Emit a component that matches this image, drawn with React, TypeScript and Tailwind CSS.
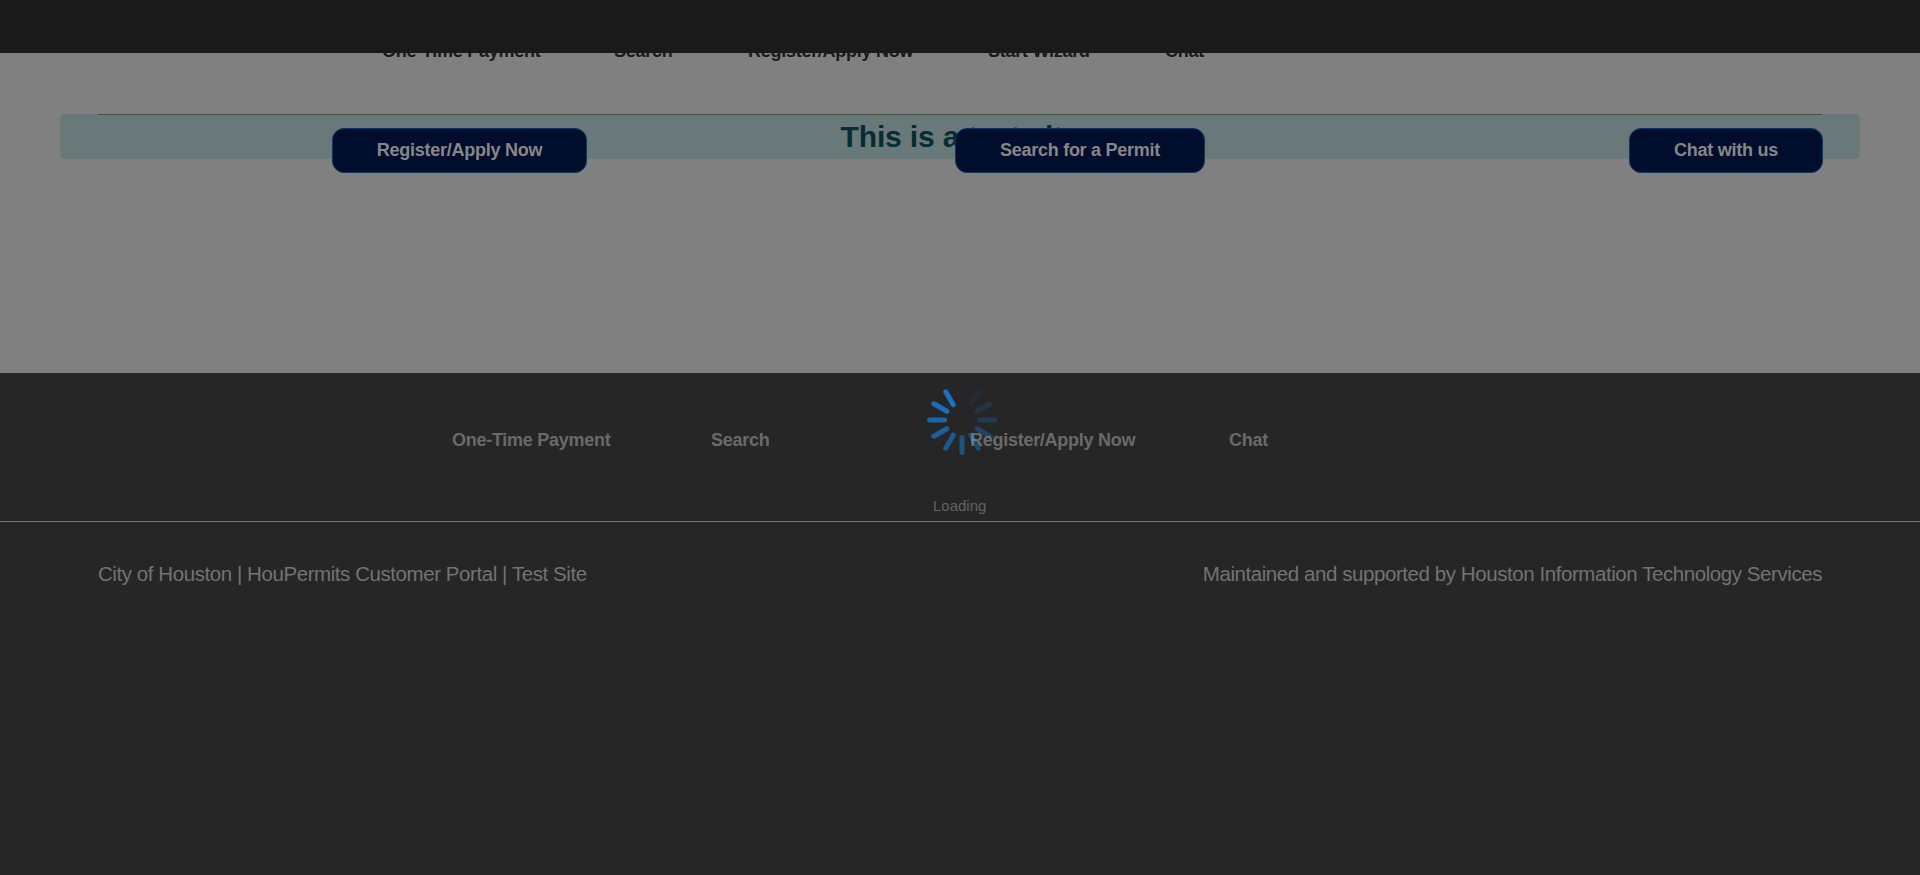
const spokes = [
  { angle: 0, color: "#25272a" },
  { angle: 30, color: "#232d36" },
  { angle: 60, color: "#233545" },
  { angle: 90, color: "#223b53" },
  { angle: 120, color: "#214365" },
  { angle: 150, color: "#1f4a74" },
  { angle: 180, color: "#1e5284" },
  { angle: 210, color: "#1d5a92" },
  { angle: 240, color: "#1c5f9c" },
  { angle: 270, color: "#1a66ab" },
  { angle: 300, color: "#196db9" },
  { angle: 330, color: "#1873c6" },
];

const buttonClass =
  "flex h-[45px] items-center justify-center rounded-[12px] border border-[#003a69] bg-[#000d2d] pb-[2px] text-[18px] font-bold leading-none tracking-[-0.26px] text-[#878787]";

function Spinner() {
  return (
    <svg className="block h-[80px] w-[80px]" viewBox="-40 -40 80 80">
      {spokes.map((s) => (
        <line
          key={s.angle}
          x1="0"
          y1="-17.5"
          x2="0"
          y2="-32.5"
          stroke={s.color}
          strokeWidth="5"
          strokeLinecap="round"
          transform={`rotate(${s.angle})`}
        />
      ))}
    </svg>
  );
}

export default function App() {
  return (
    <div className="relative flex h-[875px] w-full flex-col overflow-hidden bg-[#262626] font-['Liberation_Sans',Arial,sans-serif]">
      <header className="relative z-10 h-[53px] shrink-0 bg-[#1a1a1a]" />

      <main className="h-[320px] shrink-0 bg-[#808080]">
        <nav className="-mt-[12px] flex h-[20px] pl-[382px] text-[18px] leading-[20px] font-bold tracking-[-0.27px] text-[#1a1a1a]">
          <a className="w-[232px]">One-Time Payment</a>
          <a className="w-[134px]">Search</a>
          <a className="w-[240px]">Register/Apply Now</a>
          <a className="w-[177px]">Start Wizard</a>
          <a>Chat</a>
        </nav>
        <div className="mx-[60px] mt-[53px] h-[45px] rounded-[5px] bg-[#697878] px-[38px]">
          <div className="border-t border-[#4b4b4b] pt-[4px] text-center text-[30px] leading-[36px] font-bold tracking-[-0.15px] text-[#052d33]">
            This is a test site
          </div>
        </div>
        <div className="relative -mt-[31px] flex justify-between pr-[97px] pl-[332px]">
          <button className={`${buttonClass} w-[255px]`}>Register/Apply Now</button>
          <button className={`${buttonClass} ml-[-56px] w-[250px]`}>Search for a Permit</button>
          <button className={`${buttonClass} w-[194px]`}>Chat with us</button>
        </div>
      </main>

      <footer className="relative z-10 text-[#737373]">
        <nav className="flex h-[148px] pt-[57px] pl-[452px] text-[18px] leading-[20px] font-bold tracking-[-0.27px] text-white/32">
          <a className="w-[259px]">One-Time Payment</a>
          <a className="w-[259px]">Search</a>
          <a className="w-[259px]">Register/Apply Now</a>
          <a>Chat</a>
        </nav>
        <div className="flex justify-between border-t border-[#737373] px-[98px] pt-[40px] text-[20.5px] leading-[24px] tracking-[-0.43px]">
          <span>City of Houston | HouPermits Customer Portal | Test Site</span>
          <span>Maintained and supported by Houston Information Technology Services</span>
        </div>
      </footer>

      <div className="absolute top-[380px] left-[922px] z-0">
        <Spinner />
      </div>
      <div className="absolute top-[496px] left-[933px] z-20 text-[15px] leading-[20px] text-[#626262]">
        Loading
      </div>
    </div>
  );
}
